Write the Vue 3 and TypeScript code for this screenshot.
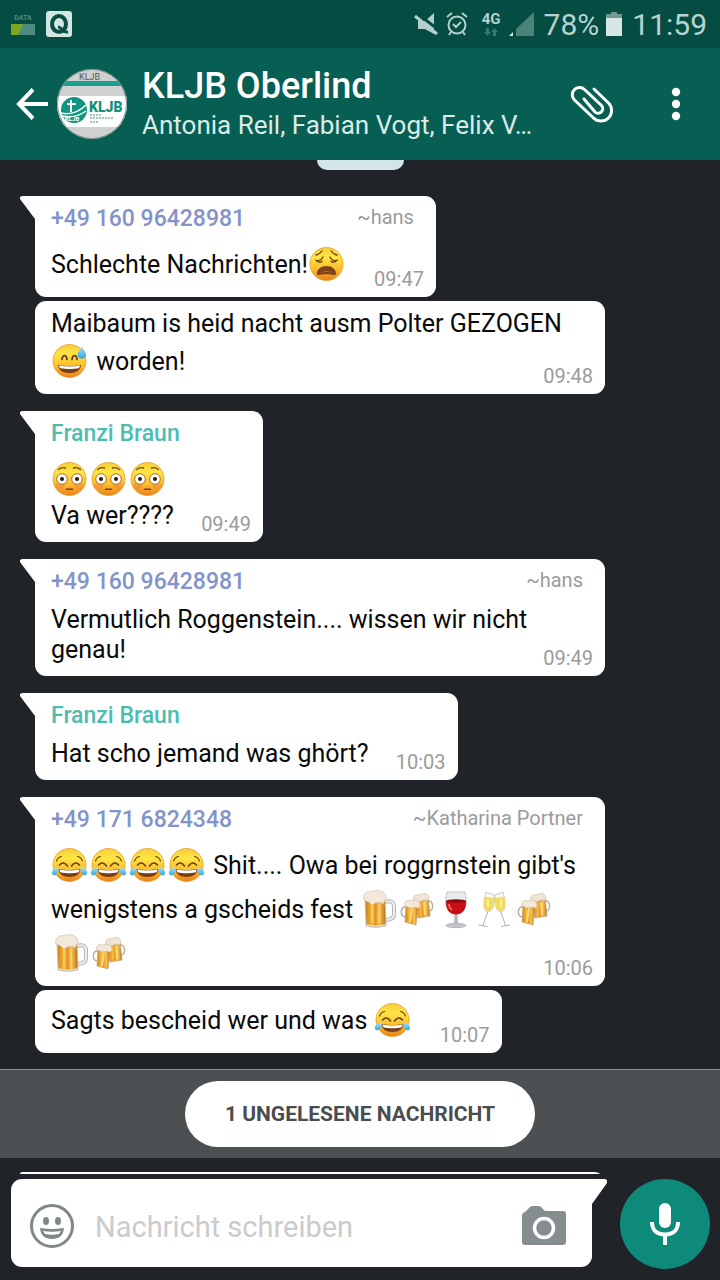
<script setup lang="ts">
type Emoji = 'weary' | 'sweat' | 'flushed' | 'joy' | 'beer' | 'mugs' | 'wine' | 'champagne'
type Part = string | { e: Emoji }

interface Message {
  id: number
  sender?: string
  tone?: 'violet' | 'teal'
  alias?: string
  parts: Part[]
  time: string
}

const e = (name: Emoji): Part => ({ e: name })

const messages: Message[] = [
  { id: 1, sender: '+49 160 96428981', tone: 'violet', alias: '~hans', parts: ['Schlechte Nachrichten!', e('weary')], time: '09:47' },
  { id: 2, parts: ['Maibaum is heid nacht ausm Polter GEZOGEN ', e('sweat'), ' worden!'], time: '09:48' },
  { id: 3, sender: 'Franzi Braun', tone: 'teal', parts: [e('flushed'), e('flushed'), e('flushed'), '\nVa wer????'], time: '09:49' },
  { id: 4, sender: '+49 160 96428981', tone: 'violet', alias: '~hans', parts: ['Vermutlich Roggenstein.... wissen wir nicht genau!'], time: '09:49' },
  { id: 5, sender: 'Franzi Braun', tone: 'teal', parts: ['Hat scho jemand was ghört?'], time: '10:03' },
  {
    id: 6,
    sender: '+49 171 6824348',
    tone: 'violet',
    alias: '~Katharina Portner',
    parts: [
      e('joy'), e('joy'), e('joy'), e('joy'),
      " Shit.... Owa bei roggrnstein gibt's wenigstens a gscheids fest ",
      e('beer'), e('mugs'), e('wine'), e('champagne'), e('mugs'), '\n', e('beer'), e('mugs'),
    ],
    time: '10:06',
  },
  { id: 7, parts: ['Sagts bescheid wer und was ', e('joy')], time: '10:07' },
]
</script>

<template>
  <div class="app">
    <svg class="sprites" width="0" height="0" aria-hidden="true">
      <defs>
        <linearGradient id="face" x1="0" y1="0" x2="0" y2="1">
          <stop offset="0" stop-color="#f6cf3a" />
          <stop offset="0.3" stop-color="#ffe544" />
          <stop offset="0.65" stop-color="#fdbd2c" />
          <stop offset="1" stop-color="#e9801c" />
        </linearGradient>
        <linearGradient id="ale" x1="0" y1="0" x2="1" y2="0">
          <stop offset="0" stop-color="#c9801a" />
          <stop offset="0.35" stop-color="#fbbd3a" />
          <stop offset="0.5" stop-color="#e2912a" />
          <stop offset="0.7" stop-color="#fcc552" />
          <stop offset="1" stop-color="#b9711a" />
        </linearGradient>
        <linearGradient id="drop" x1="0" y1="0" x2="0" y2="1">
          <stop offset="0" stop-color="#a9e4fb" />
          <stop offset="1" stop-color="#2fa6e0" />
        </linearGradient>
        <symbol id="weary" viewBox="0 0 39 44">
          <circle cx="18.500" cy="22" r="16.500" fill="url(#face)" stroke="#e59a24" stroke-width="0.800" />
          <g fill="none" stroke="#6b3e12" stroke-width="1.300" stroke-linecap="round">
            <path d="M8 13q4-1 6-4M29 13q-4-1-6-4" />
            <path d="M7.500 18q5 2 7.500-3M29.500 18q-5 2-7.500-3M9 19.500q3 1.500 5 0M28 19.500q-3 1.500-5 0" />
          </g>
          <path d="M9 32c0-5 4-8 9.500-8s9.500 3 9.500 8c-.2 1-1 1.200-2 1-4-1-11-1-15 0-1 .2-1.800 0-2-1z" fill="#7c431a" />
          <path d="M12 30.500q6.500-3 13 0-6-1-13 0z" fill="#b06a4c" />
        </symbol>
        <symbol id="sweat" viewBox="0 0 39 44">
          <circle cx="18.500" cy="22" r="16.500" fill="url(#face)" stroke="#e59a24" stroke-width="0.800" />
          <path d="M11 20.500q.5-4 2.500-4t2.500 4M21 20.500q.5-4 2.500-4t2.500 4" fill="none" stroke="#5f3410" stroke-width="1.700" stroke-linecap="round" />
          <path d="M7 26c7 1.500 16 1.500 23 0-.5 5.500-5 8-11.500 8S7.500 31.500 7 26z" fill="#7a3e14" />
          <path d="M8 26.500c7 1.300 14 1.300 21 0 0 1.500-.5 2.300-1.500 2.800-5 1-13 1-18 0-1-.5-1.500-1.300-1.500-2.800z" fill="#fff" />
          <path d="M31 7c1 4 4.500 6 4 9.500-.4 2.500-2.500 3.500-4.500 3.200-2.500-.3-4.500-2-4-4.500.5-3 3.500-4.200 4.500-8.200z" fill="url(#drop)" />
        </symbol>
        <symbol id="flushed" viewBox="0 0 39 44">
          <circle cx="18.500" cy="22" r="16.500" fill="url(#face)" stroke="#e59a24" stroke-width="0.800" />
          <ellipse cx="8.500" cy="29" rx="5" ry="3.500" fill="#f2763a" opacity="0.350" />
          <ellipse cx="28.500" cy="29" rx="5" ry="3.500" fill="#f2763a" opacity="0.350" />
          <path d="M7.500 12.500q3-2.500 7-1.500M29.500 12.500q-3-2.500-7-1.500" fill="none" stroke="#7b4712" stroke-width="1.300" stroke-linecap="round" />
          <g fill="#fff" stroke="#a2612c" stroke-width="0.900">
            <circle cx="11" cy="22" r="5.300" />
            <circle cx="26" cy="22" r="5.300" />
          </g>
          <circle cx="11" cy="22" r="2" fill="#2c1708" />
          <circle cx="26" cy="22" r="2" fill="#2c1708" />
          <path d="M15.500 32.300h6" stroke="#7b3c12" stroke-width="1.500" stroke-linecap="round" />
        </symbol>
        <symbol id="joy" viewBox="0 0 39 44">
          <circle cx="18.500" cy="22" r="16.500" fill="url(#face)" stroke="#e59a24" stroke-width="0.800" />
          <g fill="none" stroke="#6b3e12" stroke-width="1.200" stroke-linecap="round">
            <path d="M5.500 18q1.500-4 5-4.500M31.500 18q-1.500-4-5-4.500" />
            <path d="M8.500 22q4-4.500 8 1M28.500 22q-4-4.500-8 1" stroke-width="1.600" />
          </g>
          <path d="M7.500 26c7 1.500 15 1.500 22 0-.2 5-4.500 8-11 8s-10.800-3-11-8z" fill="#7a3e14" />
          <path d="M8.500 26.500c6.500 1.300 13.500 1.300 20 0 0 1.500-.5 2.500-1.500 3-5 1-12 1-17 0-1-.5-1.500-1.500-1.500-3z" fill="#fff" />
          <path d="M7.500 24.500c-3 .2-6.500 2.200-6.700 5-.1 2 1.600 3.300 3.400 2.700 2.800-1 3.500-5 3.300-7.700z" fill="url(#drop)" />
          <path d="M29.500 24.500c3 .2 6.500 2.200 6.700 5 .1 2-1.600 3.300-3.400 2.700-2.800-1-3.500-5-3.300-7.700z" fill="url(#drop)" />
        </symbol>
        <symbol id="beer" viewBox="0 0 39 44">
          <path d="M26 15c6-2 9 0 9 5v7c0 4-3 6-9 6" fill="none" stroke="#aeb0b0" stroke-width="4" />
          <path d="M26 15c6-2 9 0 9 5v7c0 4-3 6-9 6" fill="none" stroke="#eeeeec" stroke-width="2.200" />
          <path d="M6 11h20l1 28q-10 3-20 0z" fill="#e4dfd6" stroke="#b4aa9a" stroke-width="0.700" />
          <path d="M6.500 12h19.200l.8 25q-9.500 3-19 0z" fill="url(#ale)" />
          <path d="M13 18v18M20 18v18" stroke="#ffdc76" stroke-width="1.500" opacity="0.700" />
          <path d="M5 13C3 8 8 3 13 5c5-3 13-1 14 5 .5 3-1 4-2 4l-1 3-3-2-5 1-3 2-3-3z" fill="#f3e9db" stroke="#d8c6b0" stroke-width="0.800" />
        </symbol>
        <symbol id="mugs" viewBox="0 0 39 44">
          <g>
            <path d="M30 14c6-1 6 10 1 10" fill="none" stroke="#b7b0a4" stroke-width="1.500" />
            <path d="M18 12l12-2 2 19-12 2z" fill="url(#ale)" stroke="#baa27b" stroke-width="0.700" />
            <path d="M26 15l1 13" stroke="#ffd974" stroke-width="2" />
            <path d="M16 13c-2-4 3-6 6-5 4-3 9-1 9 3 0 2-2 3-3 2l-5 1-5 2z" fill="#efe5d7" stroke="#d1bea6" stroke-width="0.700" />
          </g>
          <g>
            <path d="M8 20c-6-1-6 9-1 10" fill="none" stroke="#b7b0a4" stroke-width="1.500" />
            <path d="M8 18l12 2-2 18-11-3z" fill="url(#ale)" stroke="#baa27b" stroke-width="0.700" />
            <path d="M14 21l-2 14" stroke="#ffd974" stroke-width="2" />
            <path d="M7 19c-2-4 3-7 6-5 4-2 9 0 9 4 0 3-3 4-4 2l-5 1-3-1z" fill="#f3e9db" stroke="#d1bea6" stroke-width="0.700" />
          </g>
        </symbol>
        <symbol id="wine" viewBox="0 0 39 44">
          <ellipse cx="19" cy="38.500" rx="10" ry="2.200" fill="#c5c8ca" stroke="#92979a" stroke-width="0.600" />
          <path d="M17.500 26h3l.5 10 3 2h-10l3-2z" fill="#b5babd" />
          <path d="M10 5h18c2 9 2 14-2 18q-7 7-14 0c-4-4-4-9-2-18z" fill="#e9ecee" stroke="#a9aeb1" stroke-width="0.700" />
          <path d="M9 14h20c.5 9-4 13.500-10 13.500S8.500 23 9 14z" fill="#c80f13" />
          <ellipse cx="19" cy="14" rx="10" ry="1.800" fill="#8f0d11" />
          <path d="M12 17q0 4 3 6" fill="none" stroke="#f5776c" stroke-width="1.500" />
        </symbol>
        <symbol id="champagne" viewBox="0 0 39 44">
          <g fill="none" stroke="#aeb2b4" stroke-width="1">
            <path d="M12 24L7 38.500M2.500 38l9 1.500M24.500 24l5 14.500M25 39.500l9-1.500" />
          </g>
          <path d="M10 5l8 3c1 7-1 17-6 17S7 15 10 5z" fill="#f8f8ef" stroke="#b5b6a8" stroke-width="0.700" />
          <path d="M27 5l-8 3c-1 7 1 17 6 17s5-10 2-20z" fill="#f8f8ef" stroke="#b5b6a8" stroke-width="0.700" />
          <path d="M9 10l9 1c0 6-1 13-5.500 13S7 17 9 10z" fill="#f1dc5c" />
          <path d="M28 10l-9 1c0 6 1 13 5.500 13S30 17 28 10z" fill="#f1dc5c" />
          <path d="M12 12v8M25 12v8" stroke="#fff6a8" stroke-width="1.500" />
        </symbol>
      </defs>
    </svg>

    <div class="status">
      <div class="status-side">
        <div class="data">
          <span>DATA</span>
          <svg width="24" height="11" viewBox="0 0 24 11"><path d="M0 0h24v11H0z" fill="#4c8c80" /><path d="M0 0h12L7 11H0z" fill="#7fa61c" /></svg>
        </div>
        <svg width="26" height="26" viewBox="0 0 26 26">
          <rect width="26" height="26" rx="3" fill="#d3e6e2" />
          <ellipse cx="13" cy="13" rx="7" ry="8" fill="none" stroke="#0a4d44" stroke-width="4" />
          <path d="M12 16c4 0 4 6 10 5" fill="none" stroke="#0a4d44" stroke-width="3" />
        </svg>
      </div>
      <div class="status-side indicators">
        <svg width="26" height="24" viewBox="0 0 26 24">
          <path d="M20 1v21L11 17H4V9h7z" fill="#b4d0cb" />
          <path d="M3 1l24 19" stroke="#054c43" stroke-width="3" />
          <path d="M1 4l22 18" stroke="#b4d0cb" stroke-width="3" />
        </svg>
        <svg class="alarm" width="22" height="24" viewBox="0 0 22 24" fill="none" stroke="#b4d0cb" stroke-width="2">
          <circle cx="11" cy="13" r="8.500" />
          <path d="M7 12l3 3 5-5M1 5l5-4M21 5l-5-4M5 20l-2 3M17 20l2 3" />
        </svg>
        <div class="net">
          <span>4G</span>
          <svg width="14" height="8" viewBox="0 0 14 8" fill="#37776c"><path d="M2 0h3v4h2L3.500 8 0 4h2zM9 8h3V4h2l-3.500-4L7 4h2z" /></svg>
        </div>
        <svg class="signal" width="25" height="24" viewBox="0 0 25 24"><path d="M25 0v24H7V17z" fill="#4b8378" /><path d="M0 24l4-4v4z" fill="#d3e6e2" /></svg>
        <span class="clock">78%</span>
        <svg class="battery" width="16" height="24" viewBox="0 0 16 24"><path d="M5 0h6v2h5v4H0V2h5z" fill="#6d9a92" /><path d="M0 6h16v18H0z" fill="#d7e8e4" /></svg>
        <span class="clock">11:59</span>
      </div>
    </div>

    <header class="header">
      <button class="icon-button" aria-label="Zurück">
        <svg width="34" height="32" viewBox="0 0 34 32" fill="none" stroke="#fff" stroke-width="4"><path d="M17 1.500L3 16l14 14.500M3 16h29" /></svg>
      </button>
      <svg class="avatar" width="70" height="70" viewBox="0 0 70 70">
        <defs><clipPath id="round"><circle cx="35" cy="35" r="35" /></clipPath></defs>
        <g clip-path="url(#round)">
          <rect width="70" height="70" fill="#d0d1d1" />
          <rect y="12" width="70" height="5" fill="#19a08a" />
          <rect y="27" width="70" height="31" fill="#fff" />
          <text x="22" y="11" font-size="9" fill="#555">KLJB</text>
          <circle cx="17" cy="41" r="13" fill="#12957f" />
          <path d="M14 31v12M10 35h9" stroke="#fff" stroke-width="2" />
          <path d="M4 44q14 3 25-8M5 47q13 3 24-5" fill="none" stroke="#fff" stroke-width="1.500" />
          <text x="8" y="52" font-size="6" font-weight="700" fill="#fff">KLJB</text>
          <text x="32" y="43" font-size="14" font-weight="900" fill="#12907c">KLJB</text>
          <path d="M33 46h11M33 49h24M33 53h9" stroke="#7fb5ad" stroke-width="1.500" stroke-dasharray="2 1" />
        </g>
        <circle cx="35" cy="35" r="34.500" fill="none" stroke="#7f908d" />
      </svg>
      <div class="titles">
        <h1>KLJB Oberlind</h1>
        <p>Antonia Reil, Fabian Vogt, Felix V…</p>
      </div>
      <button class="icon-button" aria-label="Anhängen">
        <svg width="44" height="40" viewBox="0 0 44 40" fill="none" stroke="#fff" stroke-width="3" stroke-linecap="round">
          <path d="M24 5l14.500 14A10.500 10.500 0 0 1 23.500 34L4.500 16A7 7 0 0 1 14.500 5.500l17 16A4.600 4.600 0 0 1 25 28L14 15" />
        </svg>
      </button>
      <button class="icon-button more" aria-label="Menü">
        <svg width="10" height="34" viewBox="0 0 10 34" fill="#fff"><circle cx="5" cy="5" r="4.200" /><circle cx="5" cy="17" r="4.200" /><circle cx="5" cy="29" r="4.200" /></svg>
      </button>
    </header>

    <main class="chat">
      <div class="date-chip"></div>
      <article v-for="m in messages" :key="m.id" class="bubble" :class="{ first: m.sender }">
        <div v-if="m.sender" class="who">
          <strong :class="m.tone">{{ m.sender }}</strong>
          <span v-if="m.alias">{{ m.alias }}</span>
        </div>
        <p class="text"><template v-for="(p, i) in m.parts" :key="i"><template v-if="typeof p === 'string'">{{ p }}</template><svg v-else class="emoji" width="39" height="44"><use :href="'#' + p.e" /></svg></template><span class="room"></span></p>
        <time>{{ m.time }}</time>
      </article>
      <div class="unread"><span>1 UNGELESENE NACHRICHT</span></div>
      <div class="bubble first next"></div>
    </main>

    <footer class="composer">
      <div class="field">
        <button class="icon-button" aria-label="Emoji">
          <svg width="44" height="44" viewBox="0 0 44 44">
            <circle cx="22" cy="22" r="20.500" fill="none" stroke="#7f8889" stroke-width="3" />
            <g fill="#7f8889"><ellipse cx="16" cy="17" rx="3" ry="4" /><ellipse cx="28" cy="17" rx="3" ry="4" /><path d="M10 24q12 2 24 0-1 11-12 11T10 24z" /></g>
            <path d="M13 27q9 1.500 18 0l-2 3q-7 1.500-14 0z" fill="#fff" />
          </svg>
        </button>
        <input type="text" placeholder="Nachricht schreiben" aria-label="Nachricht schreiben" />
        <button class="icon-button" aria-label="Kamera">
          <svg width="44" height="40" viewBox="0 0 44 40">
            <path d="M3 6l5-5q1-1 3-1h5q2 0 3 1l4 4h18q3 0 3 3v28q0 3-3 3H3q-3 0-3-3V9q0-2 3-3z" fill="#858e8f" />
            <circle cx="22" cy="22" r="9.500" fill="none" stroke="#fff" stroke-width="3.500" />
          </svg>
        </button>
      </div>
      <button class="mic" aria-label="Sprachnachricht">
        <svg width="30" height="42" viewBox="0 0 30 42">
          <rect x="9" y="0" width="12" height="25" rx="6" fill="#fff" />
          <path d="M2 19c0 8 5 12.500 13 12.500S28 27 28 19M15 31v11" fill="none" stroke="#fff" stroke-width="4" />
        </svg>
      </button>
    </footer>
  </div>
</template>

<style>
body {
  margin: 0;
  background: #202328;
}
</style>

<style scoped>
.app {
  display: flex;
  flex-direction: column;
  height: 100vh;
  overflow: hidden;
  background: #202328;
  color: #0a0a0a;
  font-family: Roboto, "Liberation Sans", sans-serif;
}
.app * {
  box-sizing: border-box;
}
.sprites {
  position: absolute;
}
svg {
  display: block;
  flex: none;
}
h1,
p {
  margin: 0;
}
.icon-button,
.mic {
  display: flex;
  flex: none;
  align-items: center;
  justify-content: center;
  padding: 0;
  border: 0;
  background: none;
}
.status {
  display: flex;
  flex: none;
  align-items: center;
  justify-content: space-between;
  height: 48px;
  padding: 0 13px 0 11px;
  background: #054c43;
}
.status-side {
  display: flex;
  align-items: center;
}
.data {
  display: flex;
  flex-direction: column;
  align-items: center;
  gap: 2px;
  margin-right: 11px;
}
.data span {
  color: #5d9389;
  font-size: 7px;
  font-weight: 500;
  line-height: 8px;
}
.alarm {
  margin-left: 6px;
}
.net {
  display: flex;
  flex-direction: column;
  align-items: center;
  margin: 0 8px 0 14px;
  gap: 1px;
}
.net span {
  color: #b4d0cb;
  font-size: 15px;
  font-weight: 700;
  line-height: 15px;
}
.signal {
  margin-right: 10px;
}
.battery {
  margin: 0 10px 0 7px;
}
.clock {
  padding-top: 2px;
  color: #b9d3ce;
  font-size: 30px;
  line-height: 36px;
}
.header {
  display: flex;
  flex: none;
  align-items: center;
  height: 112px;
  padding: 0 39px 0 16px;
  background: #075e52;
  color: #fff;
}
.avatar {
  margin: 0 15px 0 7px;
}
.titles {
  flex: 1;
  min-width: 0;
}
.titles h1 {
  font-size: 36px;
  font-weight: 500;
  line-height: 42px;
}
.titles p {
  overflow: hidden;
  color: #dcebe8;
  font-size: 26px;
  line-height: 36px;
  text-overflow: ellipsis;
  white-space: nowrap;
}
.more {
  margin-left: 57px;
}
.chat {
  display: flex;
  flex: 1;
  flex-direction: column;
  align-items: flex-start;
  min-height: 0;
  overflow: hidden;
}
.chat > * {
  flex: none;
}
.date-chip {
  align-self: center;
  width: 87px;
  height: 10px;
  margin-bottom: 9px;
  border-radius: 0 0 10px 10px;
  background: #d3e5ea;
}
.bubble {
  position: relative;
  max-width: calc(100% - 150px);
  margin: 4px 0 0 35px;
  padding: 8px 13px 11px 16px;
  border-radius: 11px;
  background: #fff;
}
.bubble.first {
  margin-top: 17px;
  border-top-left-radius: 0;
}
.bubble.first::before {
  position: absolute;
  top: 0;
  left: -15px;
  width: 16px;
  height: 23px;
  background: #fff;
  clip-path: polygon(2px 0, 100% 0, 100% 100%, 15px 100%, 0 3px, 0 1px);
  content: "";
}
.who {
  display: flex;
  justify-content: space-between;
  gap: 24px;
  margin-bottom: 8px;
  padding-right: 9px;
  font-size: 23px;
  line-height: 30px;
}
.who strong {
  font-weight: 500;
}
.who span {
  color: #9b9b9b;
  font-size: 20px;
  line-height: 26px;
}
.violet {
  color: #8393ca;
}
.teal {
  color: #4dbdb0;
}
.text {
  font-size: 25px;
  line-height: 30px;
  white-space: pre-line;
}
.emoji {
  display: inline-block;
  vertical-align: -13px;
}
.room {
  display: inline-block;
  width: 76px;
}
time {
  position: absolute;
  right: 12px;
  bottom: 6px;
  color: #9b9b9b;
  font-size: 20px;
  line-height: 24px;
}
.unread {
  display: flex;
  align-items: center;
  justify-content: center;
  align-self: stretch;
  height: 89px;
  margin-top: 16px;
  border-top: 1px solid #8f9497;
  background: #4c5053;
}
.unread span {
  padding: 0 40px;
  border-radius: 33px;
  background: #fff;
  color: #4b4c4d;
  font-size: 21px;
  font-weight: 700;
  line-height: 66px;
}
.bubble.next {
  width: 100%;
  height: 87px;
  margin-top: 14px;
}
.composer {
  display: flex;
  flex: none;
  align-items: flex-start;
  gap: 28px;
  padding: 5px 10px 11px 11px;
}
.field {
  position: relative;
  display: flex;
  flex: 1;
  align-items: center;
  min-width: 0;
  height: 88px;
  padding: 5px 26px 0 19px;
  border-radius: 11px 0 11px 11px;
  background: #fff;
}
.field::after {
  position: absolute;
  top: 0;
  right: -15px;
  width: 16px;
  height: 25px;
  background: #fff;
  clip-path: polygon(0 0, 14px 0, 100% 1px, 100% 4px, 1px 100%, 0 100%);
  content: "";
}
.field input {
  flex: 1;
  min-width: 0;
  padding: 2px 20px 0 21px;
  border: 0;
  outline: 0;
  background: none;
  color: #0a0a0a;
  font: 29px/36px Roboto, "Liberation Sans", sans-serif;
}
.field input::placeholder {
  color: #cbcbcb;
  opacity: 1;
}
.mic {
  width: 90px;
  height: 90px;
  border-radius: 50%;
  background: #0e8a7a;
}
</style>
